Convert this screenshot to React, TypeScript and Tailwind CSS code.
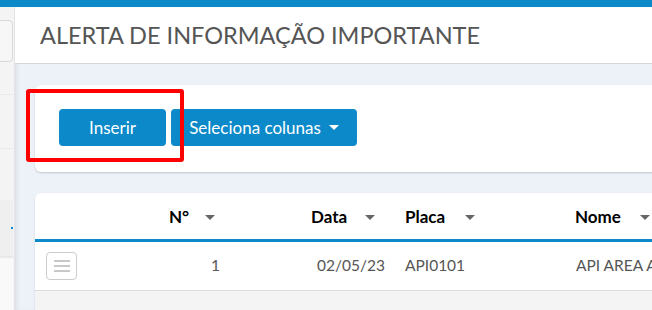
import React from "react";

const Caret = () => (
  <span className="inline-block w-0 h-0 border-l-[5px] border-r-[5px] border-t-[5px] border-l-transparent border-r-transparent border-t-[#666]" />
);

const HeaderCell = ({ label, width, textWidth }: { label: string; width: string; textWidth: string }) => (
  <div className={`${width} shrink-0 flex items-center`}>
    <span className={`${textWidth} font-bold text-black`}>{label}</span>
    <Caret />
  </div>
);

const Sidebar = () => (
  <div className="w-[15px] shrink-0 overflow-hidden bg-[#f4f4f4] border-r border-[#e4e4e4] flex flex-col">
    <div className="w-[200px] -ml-[187px] flex flex-col">
      <div className="mt-[13px] h-[42px] rounded-[4px] border border-[#d8d8d8] bg-[#f7f7f7]" />
      <div className="mt-[32px] h-px bg-[#e8e8e8]" />
      <div className="mt-[53px] h-px bg-[#e8e8e8]" />
      <div className="mt-[51px] h-[56px] bg-[#efefef] flex items-center justify-end">
        <span className="w-[2px] h-[2px] bg-[#0b89c9]" />
      </div>
      <div className="h-[3px] bg-gradient-to-b from-[#e2e2e2] to-[#f9f9f9]" />
      <div className="h-[60px] bg-[#f9f9f9]" />
    </div>
  </div>
);

export default function App() {
  return (
    <div
      className="w-[652px] h-[310px] overflow-hidden flex flex-col bg-white"
      style={{ fontFamily: '"Lato", "Liberation Sans", sans-serif' }}
    >
      <div className="h-[7px] shrink-0 bg-[#0b89c9]" />
      <div className="flex flex-1 min-h-0">
        <Sidebar />
        <main className="flex-1 min-w-0 flex flex-col bg-[#ecf2f8] shadow-[inset_4px_0_4px_-2px_rgba(0,0,0,0.08)]">
          <header className="h-[57px] shrink-0 bg-white border-b border-[#d6d6d6] flex items-center pl-[25px] pt-[2px]">
            <h1 className="text-[23.5px] text-[#555] whitespace-nowrap">
              ALERTA DE INFORMAÇÃO IMPORTANTE
            </h1>
          </header>
          <div className="pl-[20px] pt-[21px] flex flex-col gap-[21px]">
            <section className="relative h-[87px] w-[640px] bg-white rounded-[6px] shadow-[0_1px_2px_rgba(0,0,0,0.18)] flex items-start pl-[24px] pt-[24px] gap-[5px]">
              <button className="h-[37px] w-[107px] rounded-[4px] bg-[#0b89c9] text-white text-[17px]">
                Inserir
              </button>
              <button className="h-[37px] w-[186px] rounded-[4px] bg-[#0b89c9] text-white text-[17px] flex items-center justify-center gap-[8px]">
                Seleciona colunas
                <span className="inline-block w-0 h-0 border-l-[5px] border-r-[5px] border-t-[5px] border-l-transparent border-r-transparent border-t-white" />
              </button>
              <div className="absolute left-[-9px] top-[4px] w-[158px] h-[73px] border-[4px] border-[#ff0000] rounded-[3px]" />
            </section>
            <section className="w-[640px] h-[140px] bg-white rounded-t-[6px] shadow-[0_1px_2px_rgba(0,0,0,0.15)] text-[17px] flex flex-col overflow-hidden">
              <div className="h-[49px] shrink-0 flex items-center border-b-[3px] border-[#0b89c9] pt-[2px]">
                <div className="w-[134px] shrink-0" />
                <HeaderCell label="N°" width="w-[142px]" textWidth="w-[36px]" />
                <HeaderCell label="Data" width="w-[94px]" textWidth="w-[54px]" />
                <HeaderCell label="Placa" width="w-[170px]" textWidth="w-[60px]" />
                <HeaderCell label="Nome" width="w-[100px]" textWidth="w-[65px]" />
              </div>
              <div className="h-[49px] shrink-0 flex items-center border-b border-[#dcdcdc] text-[#555] text-[15.5px]">
                <div className="w-[42px] shrink-0 pl-[11px]">
                  <button className="w-[31px] h-[28px] rounded-[4px] border border-[#cccccc] bg-white flex flex-col items-center justify-center gap-[3px]">
                    <span className="w-[16px] h-[2px] bg-[#c8c8c8]" />
                    <span className="w-[16px] h-[2px] bg-[#c8c8c8]" />
                    <span className="w-[16px] h-[2px] bg-[#c8c8c8]" />
                  </button>
                </div>
                <div className="w-[143px] shrink-0 text-right">1</div>
                <div className="w-[185px] shrink-0 pl-[97px]">02/05/23</div>
                <div className="w-[171px] shrink-0">API0101</div>
                <div className="shrink-0 whitespace-nowrap">API AREA A</div>
              </div>
              <div className="flex-1 bg-[#f4f4f4]" />
            </section>
          </div>
        </main>
      </div>
    </div>
  );
}
